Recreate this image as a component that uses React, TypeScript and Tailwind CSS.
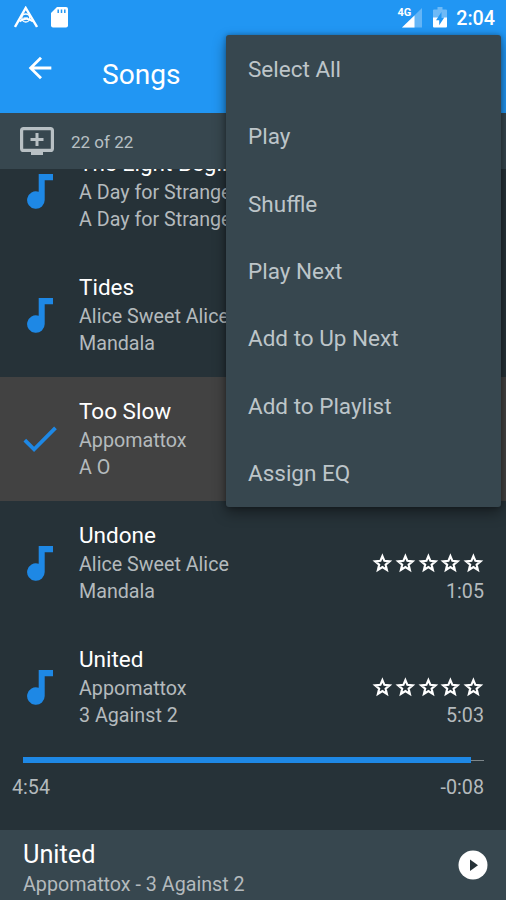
import React from "react";
import { MdArrowBack, MdCheck } from "react-icons/md";

interface Song {
  title: string;
  artist: string;
  album: string;
  time?: string;
  selected?: boolean;
}

const songs: Song[] = [
  {
    title: "The Light Begins",
    artist: "A Day for Strangers",
    album: "A Day for Strangers",
  },
  { title: "Tides", artist: "Alice Sweet Alice", album: "Mandala" },
  { title: "Too Slow", artist: "Appomattox", album: "A O", selected: true },
  {
    title: "Undone",
    artist: "Alice Sweet Alice",
    album: "Mandala",
    time: "1:05",
  },
  { title: "United", artist: "Appomattox", album: "3 Against 2", time: "5:03" },
];

const menuItems = [
  "Select All",
  "Play",
  "Shuffle",
  "Play Next",
  "Add to Up Next",
  "Add to Playlist",
  "Assign EQ",
];

const NoteIcon = () => (
  <svg className="ml-[27px] mt-[45px] h-[35px] w-[26px]" viewBox="0 0 26 35">
    <path
      fill="#1e88e5"
      d="M11.700 0H26v6.200h-8.300v19.600a8.800 8.800 0 1 1-6-8.100z"
    />
  </svg>
);

const StarIcon = () => (
  <svg className="size-[22.800px]" viewBox="0 0 24 24">
    <path
      fill="none"
      stroke="#fff"
      strokeWidth="2.300"
      d="m12 4.300 2.100 5 5.500.5-4.200 3.600 1.300 5.400-4.700-2.900-4.700 2.900 1.300-5.400-4.200-3.600 5.500-.5z"
    />
  </svg>
);

const StatusBar = () => (
  <div className="flex h-[34px] items-start text-white">
    <svg className="ml-[14px] mt-[6px] h-[22px] w-6" viewBox="0 0 24 22">
      <g fill="none" stroke="#fff">
        <path strokeWidth="2.400" d="M1 21 11.700 2 23 21" />
        <path strokeWidth="1.800" d="M5.500 15.500Q12 10 19 15.500" />
        <circle strokeWidth="1.300" cx="11.800" cy="12" r="4" />
        <path strokeWidth="1.200" d="M9.500 12h4.500" />
      </g>
    </svg>
    <svg className="ml-[13px] mt-[7px] h-[21px] w-[17px]" viewBox="0 0 17 21">
      <path
        fill="#fff"
        d="M6 0h9a2 2 0 0 1 2 2v16.500a2 2 0 0 1-2 2H2a2 2 0 0 1-2-2V6z"
      />
      <path
        stroke="#2196f3"
        strokeWidth="1.500"
        d="M7.200 2.500v3.500M10.500 2.500v3.500M13.800 2.500v3.500"
      />
    </svg>
    <div className="ml-auto flex">
      <span className="mt-[6px] text-[11px] font-bold leading-[13px]">4G</span>
      <svg className="-ml-[9px] mt-2 h-5 w-5" viewBox="0 0 20 20">
        <path fill="#fff" fillOpacity=".3" d="M20 0v19.500H0z" />
        <path fill="#fff" d="M12.500 7.500v12H0z" />
      </svg>
      <svg className="ml-[11px] mt-[7px] h-[21px] w-[14px]" viewBox="0 0 14 21">
        <path
          fill="#fff"
          fillOpacity=".35"
          d="M4.500 0h5v2.500H13a1 1 0 0 1 1 1V11H0V3.500a1 1 0 0 1 1-1h3.500z"
        />
        <path fill="#fff" d="M0 10.500h14v9a1 1 0 0 1-1 1H1a1 1 0 0 1-1-1z" />
        <path fill="#2196f3" d="M8.500 5 3 13.200h3.200v5L11.300 10.500H8.500z" />
      </svg>
      <span className="ml-[9px] mr-[11px] mt-[7px] text-[19.700px] font-medium leading-[23px]">
        2:04
      </span>
    </div>
  </div>
);

const SongRow = ({ song }: { song: Song }) => (
  <div
    className={`flex h-[124px] shrink-0 ${song.selected ? "bg-[#424242]" : ""}`}
  >
    <div className="w-[79px] shrink-0">
      {song.selected ? (
        <MdCheck className="ml-[17px] mt-[39px] size-[45.500px] text-[#1e88e5]" />
      ) : (
        <NoteIcon />
      )}
    </div>
    <div className="grow whitespace-nowrap pt-5">
      <h2 className="text-[22.500px] leading-[28px] text-white">{song.title}</h2>
      <p className="mt-[2px] text-[19.700px] leading-[27px] text-[#b4babd]">
        {song.artist}
      </p>
      <p className="text-[19.700px] leading-[27px] text-[#b4babd]">
        {song.album}
      </p>
    </div>
    {song.time && (
      <div className="flex flex-col items-end pr-[21px] pt-[51px]">
        <div className="flex">
          {[1, 2, 3, 4, 5].map((n) => (
            <StarIcon key={n} />
          ))}
        </div>
        <span className="mr-px mt-[3px] text-[19.700px] leading-[27px] text-[#b4babd]">
          {song.time}
        </span>
      </div>
    )}
  </div>
);

const OverflowMenu = () => (
  <div className="absolute left-[226px] top-[35px] w-[275px] rounded-[3px] bg-[#37474f] shadow-[0_6px_14px_rgba(0,0,0,0.4),0_0_5px_rgba(0,0,0,0.3)]">
    {menuItems.map((item) => (
      <div
        key={item}
        className="flex h-[67.400px] items-center pl-[22px] pt-[2px] text-[22.500px] text-[#bdc5c9]"
      >
        {item}
      </div>
    ))}
  </div>
);

const App = () => {
  return (
    <div className="relative flex h-[900px] w-[506px] flex-col overflow-hidden bg-[#263238] font-['Roboto',sans-serif]">
      <header className="h-[113px] shrink-0 bg-[#2196f3] text-white">
        <StatusBar />
        <div className="flex">
          <MdArrowBack className="ml-[23px] mt-[17px] size-[34px]" />
          <h1 className="ml-[45px] mt-[24px] text-[28.100px] leading-[34px]">
            Songs
          </h1>
        </div>
      </header>

      <div className="flex h-[56px] shrink-0 items-center bg-[#37474f] text-[#b8c0c4]">
        <svg className="ml-[20px] h-7 w-[34px]" viewBox="0 0 34 28">
          <rect
            x="1.600"
            y="1.600"
            width="30.800"
            height="21.800"
            rx="2"
            fill="none"
            stroke="currentColor"
            strokeWidth="3.200"
          />
          <path fill="currentColor" d="M11 24h12v4H11z" />
          <path stroke="currentColor" strokeWidth="3" d="M17 6v13M10.500 12.500h13" />
        </svg>
        <span className="ml-[17px] pt-[3px] text-[17px]">22 of 22</span>
      </div>

      <div className="flex h-[580px] shrink-0 flex-col justify-end overflow-hidden">
        {songs.map((song) => (
          <SongRow key={song.title} song={song} />
        ))}
      </div>

      <div className="h-[81px] shrink-0 pt-2 text-[19.700px] text-[#b4babd]">
        <div className="ml-[23px] mr-[22px] flex h-[6px] items-center">
          <div className="h-[6px] w-[448px] bg-[#1e88e5]"></div>
          <div className="h-px grow bg-[#7d868a]"></div>
        </div>
        <div className="ml-3 mr-[22px] mt-[11px] flex justify-between leading-[27px]">
          <span>4:54</span>
          <span>-0:08</span>
        </div>
      </div>

      <footer className="flex grow items-start bg-[#37474f] pl-[23px] pr-[18px]">
        <div className="grow pt-[10px]">
          <h2 className="text-[25.300px] leading-[30px] text-white">United</h2>
          <p className="text-[19.700px] leading-[29px] text-[#b4babd]">
            Appomattox - 3 Against 2
          </p>
        </div>
        <svg className="mt-5 size-[30px]" viewBox="0 0 30 30">
          <circle cx="15" cy="15" r="14.500" fill="#fff" />
          <path fill="#263238" d="M12 9.500v11.500l8-5.750z" />
        </svg>
      </footer>

      <OverflowMenu />
    </div>
  );
};

export default App;
